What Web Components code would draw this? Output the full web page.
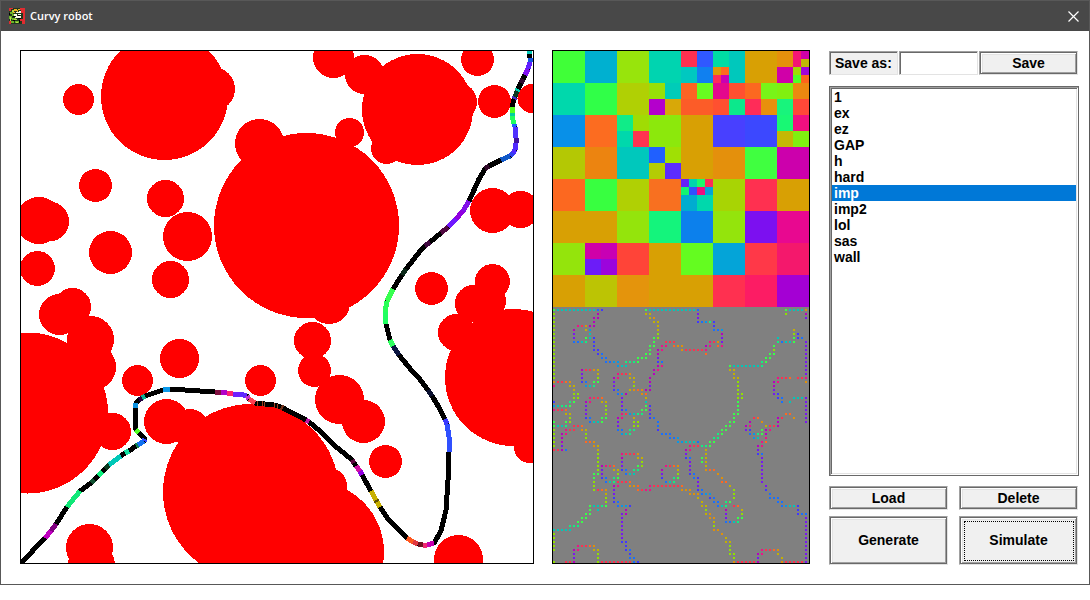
<!DOCTYPE html>
<html lang="en">
<head>
<meta charset="utf-8">
<title>Curvy robot</title>
<style>
html, body { margin: 0; background: #fff; }
body { font: bold 14px/16px "Liberation Sans", Arial, sans-serif; color: #000; }
</style>
</head>
<body>
<app-window>
  <title-bar slot="title">Curvy robot</title-bar>
  <scene-view></scene-view>
  <field-maps></field-maps>
  <map-panel></map-panel>
</app-window>

<script>
class AppWindow extends HTMLElement {
  constructor() {
    super();
    this.attachShadow({ mode: "open" }).innerHTML = `
      <style>
        :host { display: block; box-sizing: border-box; border: 1px solid #585858; border-top: 0; background: #fff; }
        main { display: grid; grid-template-columns: minmax(0, 514fr) minmax(0, 258fr) minmax(0, 251fr);
               gap: 18px; align-items: start; padding: 19px 10px 19px 19px; }
      </style>
      <slot name="title"></slot>
      <main><slot></slot></main>`;
  }
}

class TitleBar extends HTMLElement {
  constructor() {
    super();
    this.attachShadow({ mode: "open" }).innerHTML = `
      <style>
        :host { display: flex; align-items: center; gap: 5px; box-sizing: border-box; height: 31px; padding: 0 8px;
                border-top: 1px solid #585858; background: #484848; color: #fff;
                font: 600 11px/16px "Open Sans", "Noto Sans", sans-serif; }
        h1 { flex: 1; margin: 0; font: inherit; }
        button { display: flex; padding: 2px; border: 0; background: none; }
        svg { display: block; }
      </style>
      <svg width="16" height="16" viewBox="0 0 16 16" shape-rendering="crispEdges" aria-hidden="true">
        <path fill="#20381c" d="M0 0h16v16H0z"/>
        <path fill="#e02c30" d="M11 0h5v16h-3v-3h-2v-2h3V5h-2V2h-1zM0 0h4v1H2v2H0zM0 13h2v3H0zM12 12h2v1h-2z"/>
        <path fill="#6cb428" d="M1 4h3v2H1zM0 8h3v3H0zM3 10h4v2H3zM2 13h3v2H2zM6 13h5v2H6zM3 6h2v2H3z"/>
        <path fill="#b8dc48" d="M3 2h2v2H3zM1 9h1v4H1zM5 11h3v1H5zM7 14h2v1H7z"/>
        <path fill="#f0b020" d="M5 1h3v2H5zM8 2h1v2H8zM4 4h2v1H4zM9 1h2v1H9z"/>
        <path fill="#f8f8e8" d="M7 4h4v1H7zM5 6h3v2H5zM7 8h5v2H7zM6 9h3v1H6zM10 3h2v2h-2zM9 6h3v1H9z"/>
        <path fill="#000" d="M9 7h2v1H9zM4 8h2v1H4zM9 10h3v1H9zM4 12h2v1H4zM10 12h1v3h-1zM0 5h1v2H0z"/>
      </svg>
      <h1><slot></slot></h1>
      <button type="button" aria-label="Close">
        <svg width="11" height="11" viewBox="0 0 11 11" fill="none" stroke="#fff" stroke-width="1.2"><path d="M.5.5l10 10M10.5.5l-10 10"/></svg>
      </button>`;
  }
}

/* Obstacles: centre x, centre y, radius. Window coordinates, as is the trail. */
const OBSTACLES = [
  [78.5,99.5,15.5],[164.5,96.5,63.5],[213,89,22],[95.5,185.5,16.5],[165.5,198.5,18.5],[187.5,236.5,24.5],
  [110.5,252.5,21.5],[170.5,279.5,18.5],[39,220.5,23.5],[49,221.5,20],[37.5,268.5,17.5],[72.5,306.5,18.5],
  [59.5,314.5,20.5],[90.5,339.5,23.5],[93,367,23],[27.5,413,80.5],[112.5,431.5,18.5],[137.5,380.5,15.5],
  [179.5,358.5,19.5],[260.5,380.5,15.5],[166.5,421.5,22.5],[190,428,19],[251,492,88],[329,486,18],
  [313.5,552,70.5],[89.5,547.5,23.5],[91.5,565,23.5],[333.5,57.5,20.5],[364.5,74.5,19.5],[417.5,109.5,55.5],
  [457.5,102,19.5],[386.5,148.5,15.5],[477.5,59.5,16.5],[494.5,101.5,16.5],[532,98.5,14.5],[349.5,132.5,14.5],
  [306.5,225.5,92.5],[259.5,143.5,24.5],[329,303,21],[492.5,210.5,22.5],[520.5,209.5,18.5],[431.5,288.5,16.5],
  [492.5,281.5,17.5],[473.5,303.5,18.5],[487.5,301,18.5],[456.5,332.5,18.5],[513.5,377.5,68.5],[530,447,16],
  [312.5,340.5,18.5],[314.5,370.5,16.5],[339.5,399.5,24.5],[363.5,421.5,21.5],[385.5,461.5,16.5],[458.5,559.5,24.5]
];

/* Trail: each point ends a stretch painted in the colour named with it; no colour means black. */
const TRAIL = `21,563 45,538 51,531:c000c0 56,524:800080 67,507 80,491:10e878 91,483 94,480:105030 98,476
102,472:10f080 105,469 109,465:0a3a20 121,456:00c8b8 125,453 129,451:10e0a0 136,446 138,445:108050 144,441:1070f0
145,439:3048ff 139,433 136,430:50ff20 135,425 135,408 136,403:0a90e0 139,400 142,398:200040 145,396:10b090
154,393 163,390 170,389:0a98e8 215,392 221,392:801040 227,393:b000c8 233,394:ff2070 240,394:7020ff 247,396:6028ff
249,399:c030d0 255,403:ff4050 257,403 258,403:a04020 262,403 263,403:a04020 264,404 265,404:a04020 270,404 274,405 275,405:a04020
277,406 278,406:a04020 281,407 283,408:703018 306,420 309,422:c010a0 320,431 335,446 345,454 352,460 354,463:600840 356,466
360,471:d010a0 362,475:9000e0 371,491 376,500:c8b000 377,502:605000 380,507:c8b000 388,519 396,527 407,538
413,542:ff5820 418,544:e03840 423,545:701020 427,545:f02870 434,543:c800b0 441,531 446,510 448,480 449,452
449,437:3050ff 447,424:3050ff 445,419:3a38ff 437,404 432,396 428,390:0a1030 418,377 412,371 399,355 393,346:0a1440
390,340:30ff60 386,324 385,312:20ff60 387,301:28ff58 393,289:38ff50 402,275 406,269:0a2818 421,250 425,246
430,242:400840 441,233 448,227:500840 456,219:7018ff 463,211:9000e0 469,201:8010e8 479,179 485,169 489,166:300828
501,160 510,156:1058c8 513,153:3040f0 515,150:5028ff 516,143:5028ff 516,138:4010a0 515,127:5030ff 514,124:2060ff
512,116:20ff60 512,113:00d0a0 512,107:50ff20 514,99 515,97:4030c0 517,91:0a3820 518,89:00d0b0 521,83 523,79:300830 525,75 528,69:8010f0
530,62:6020ff 530,58:1858e0 529,54 529,50:00c8b8`;

class SceneView extends HTMLElement {
  constructor() {
    super();
    const circles = OBSTACLES.map(([x, y, r]) => `<circle cx="${x}" cy="${y}" r="${r}"/>`).join("");
    const steps = TRAIL.trim().split(/\s+/).map(s => s.split(":"));
    const line = steps.map(s => s[0]).join(" ");
    let coloured = "";
    steps.forEach(([p, c], i) => {
      if (c) coloured += `<polyline stroke="#${c}" points="${steps[i - 1][0]} ${p}"/>`;
    });
    this.attachShadow({ mode: "open" }).innerHTML = `
      <style>
        :host { display: block; border: 1px solid #000; }
        svg { display: block; width: 100%; height: auto; }
      </style>
      <svg viewBox="21 51 512 512" shape-rendering="crispEdges" role="img" aria-label="Obstacles and path">
        <g fill="#f00">${circles}</g>
        <g fill="none" stroke-width="5" stroke-linejoin="round"><polyline stroke="#000" points="${line}"/>${coloured}</g>
      </svg>`;
  }
}

/* Quadtree cells, one 32px block per entry: a colour, or four nested entries. */
const BLOCKS = [
  ["40ff38","00b0d0","98e40c","00d4b0",["ff3050","3058ff","00c8c0","1080f0"],
   ["00dca4","00c8bc",["e09808","ff6820","ff2c58","c800b4"],"00c8bc"],"d8a004",
   ["e4900c",["f41874","d000a8","f41874","c0b804"],"d000a8",["a0dc04","a004d8","50ff28","fc641c"]]],
  ["00d8ac","30ff48","b0d004",["98e008","00ccb8","b400cc","d8a808"],["fc6424","68fc20","fc5c28","fc5c28"],
   ["e4088c","ff5030","ff5030","0ce88c"],["fc6820","78f418","ff2c58","e8900c"],["80f010","ec8810","18f47c","ff4838"]],
  ["0890e8","fc6c20",["10ec88","a0dc04","00d8ac","ff3450"],"8ce80c","d8a004","4840ff","3c48ff",["18f874","f01080","c4b804","80f010"]],
  ["b4c804","ec8410","00c8bc",["2060ff","a0e004","b4cc04","5c2cff"],"d8a004","e4900c","40ff40","cc00ac"],
  ["fc6820","38ff40","b0d004","f87020",
   [["6820f8","00d4ac","14f470","3050ff"],["1cf86c","fc2c58","ec1080","04a4d8"],"00acd0","00d8ac"],"a8d404","ff3050","d8a004"],
  ["d8a004","d8a004","94e40c","14f47c","0c80ec","94e40c","7c10f0","e80890"],
  ["94e40c",["d000a8","c800b4","6c1cf8","9c04dc"],"ff4438","d8a004","64fc20","04a4d8","ff3848","f4186c"],
  ["d8a004","bcc404","e4940c","d8a004","d8a004","ff3050","fc1c64","a400d4"]
];

/* Edge normals: one line per row of the 64x64 grid, "column" or "from-to" and a hue letter. */
const HUES = { r:"ff3050", o:"ff6820", O:"e09008", y:"c4b000", l:"90e000", g:"38ff48", s:"10f080", t:"00c8b8",
               c:"0898e8", b:"1870ff", i:"4038ff", v:"7818f0", m:"b800c0", k:"f01088" };
const DOTS = `0g 1-10t 11b 12i 23g 24-35t 36b 58g 59-62t 63O
0l 11m 23y 24y 36v 58l 63m
0l 10m 11m 24y 25O 36v 63v
0l 10m 25y 26y 36i 37b 38c 39s 40i
0l 6k 7r 8O 9m 10m 26y 40i
0l 5m 8y 9c 26y 40b 41b 42c 60y
0l 5v 9t 26l 42m 60l 61i
0l 5v 8g 9t 10i 25g 26l 42v 56t 60g 61i 62b
0l 5b 6b 7t 8s 10i 25g 28r 29r 30r 39k 40r 41O 42v 56s 57b 58t 59t 60g 63v
0l 10i 24g 25g 27k 28k 30o 31O 32O 38m 39k 41o 42k 55g 63v
0l 10i 11i 24g 26m 27k 32O 33-37r 38k 55l 63v
0l 11i 12b 23g 24g 26m 38o 54g 55g 63v
0l 12b 13b 21-23g 26v 53g 54g 63v
0l 13b 14b 15c 16c 18-20s 21g 26i 27b 52s 53g 63v
0l 16c 17t 18t 26m 27k 44g 45-51t 52s 63v
0l 7m 8r 9r 10O 11y 25m 26k 44y 45y 63v
0l 7v 11y 16k 17r 18r 19O 25m 45y 63v
0l 7v 11l 15m 16k 19y 20y 24m 45y 46y 56k 57r 58r 59o 61r 62r 63k
0O 1r 2r 3o 4O 7i 8b 10g 11g 15v 20y 24m 46l 55m 56k 63O
0k 4y 5y 8c 9t 10s 15v 20l 24v 46l 55m
5y 15i 16b 19y 20O 21o 22O 23m 24m 46l 55v
5l 6l 16b 17c 18m 22O 23o 46l 47l 55v 56i
5l 6l 9k 10r 11r 12o 17v 23y 46l 47l 56i 57b 60t 61t 62t 63v
0i 4s 5g 8m 9k 12y 13y 17v 23t 46g 57b 59t 63v
0c 1t 2s 3s 4g 8v 13l 17v 23g 24i 46g 63v
0k 1r 2r 3o 8v 13l 17i 18b 22g 23g 24v 46g 63v
3y 4y 8v 13l 17k 18r 19c 20t 21s 22s 24i 45g 46g 58o 59o 63v
4l 8i 9b 12g 13g 16m 17k 20y 24i 25b 45g 50r 51o 56m 57r 60O 63v
0g 3g 4l 9b 10t 11t 12g 16v 20l 21l 26b 44g 45g 49m 52O 56m 63v
0g 1t 2t 3s 5r 6r 7o 16v 20l 21l 26b 43g 44g 48m 49k 53y 54r 55r 56m
0l 3k 4r 5r 7O 8y 16b 17b 19s 20s 26i 42g 43g 48v 49i 52g 53m 54k
0l 2m 3k 8l 17c 18t 19s 27b 28b 29b 41s 42g 49b 50c 51s 52g 53m
0l 2m 8l 29b 30b 31c 40s 41s 50c 51t 53k
0l 2m 8o 9o 10O 31c 32c 33t 34t 35t 36b 39g 40g 52k 53o
0l 2v 10O 11y 34k 35r 36r 37s 38s 39g 51m 52k
0r 1r 2m 3b 11y 33m 34k 38y 51v
11l 17k 18r 19r 20r 21O 33v 38y 51i 52b
11l 17m 21y 22y 33i 34b 37g 38y 52v
11l 17v 22l 34v 37g 38y 52v
11l 12m 13k 14r 15o 17v 21g 22l 28k 29r 30o 31O 34v 38y 52v
11l 12v 15y 16y 17i 18b 20s 21s 27m 31y 34v 38O 39o 40o 52v
10g 11g 12v 16l 18b 19t 20t 27v 31l 34i 35b 41O 52v
10g 12i 13b 15s 16g 27i 30s 31g 35b 36i 42O 52v
10l 13b 14t 15s 16r 17r 18r 19o 28b 29t 30s 36v 42o 43o 52v
10l 15m 16k 19O 20O 21o 24k 25-31r 32o 36v 44y 53v
10l 11r 12o 13O 15v 21o 22r 23k 24k 32O 33O 34O 36i 37b 45l 53i
13y 15v 34O 35O 36O 37b 38c 39c 45l 54b
13l 15i 36y 39i 40b 45l 54b 55b 56b
13l 15i 16b 37y 40b 41b 43s 44g 56b 57b
9g 10t 11t 12s 13g 16b 17c 18c 19i 37y 38y 41b 42t 43s 45r 46o 57b 58c 59t 60t 61i
9g 11t 18m 38l 43m 47y 61i
8g 9g 17v 18m 38y 39O 43v 47l 61i 62b 63b
7g 8g 17v 39O 40O 43v 46g 47g 63v
6g 7g 17v 40y 43b 44b 45t 46s 63v
4s 5s 6s 17v 40l 63v
0-4t 17v 40O 41O 63v
0l 17v 42O 63v
0l 17v 43y 63v
0l 17i 18i 43y 44y 63v
0l 6k 7r 8r 9o 10O 18i 44l 63v
0l 5m 6k 10y 11y 18i 19b 44l 52k 53r 54r 55o 56O 63v
5v 11l 19i 44l 45l 51m 52k 56y 63v
5v 11l 19b 20b 45l 51v 57y 63v
0l 3r 4r 5m 11l 12-19r 20b 21i 45O 46-50r 51m 57O 58-62r 63v`;

class FieldMaps extends HTMLElement {
  constructor() {
    super();
    const cell = (c, x, y, s) => Array.isArray(c)
      ? c.map((k, i) => cell(k, x + (i % 2) * s / 2, y + (i >> 1) * s / 2, s / 2)).join("")
      : `<rect x="${x}" y="${y}" width="${s}" height="${s}" fill="#${c}"/>`;
    const blocks = BLOCKS.map((row, j) => row.map((c, i) => cell(c, i * 32, j * 32, 32)).join("")).join("");
    const paths = {};
    DOTS.split("\n").forEach((row, j) => row.split(" ").forEach(t => {
      const hue = t.slice(-1);
      const [from, to = from] = t.slice(0, -1).split("-").map(Number);
      for (let i = from; i <= to; i++) paths[hue] = (paths[hue] || "") + `M${i * 4} ${258 + j * 4}h2v2h-2z`;
    }));
    const dots = Object.entries(paths).map(([h, d]) => `<path fill="#${HUES[h]}" d="${d}"/>`).join("");
    this.attachShadow({ mode: "open" }).innerHTML = `
      <style>
        :host { display: block; border: 1px solid #000; }
        svg { display: block; width: 100%; height: auto; }
      </style>
      <svg viewBox="0 0 256 512" shape-rendering="crispEdges" role="img" aria-label="Direction maps">
        ${blocks}<rect y="256" width="256" height="256" fill="#808080"/>${dots}
      </svg>`;
  }
}

class EdgeButton extends HTMLElement {
  constructor() {
    super();
    this.attachShadow({ mode: "open" }).innerHTML = `
      <style>
        :host { display: block; box-sizing: border-box; height: 24px; border: 1px solid; border-color: #a0a0a0 #e3e3e3 #e3e3e3 #a0a0a0; }
        :host([tall]) { height: 49px; }
        button { display: block; position: relative; box-sizing: border-box; width: 100%; height: 100%; padding: 0;
                 border: 1px solid #696969; border-radius: 0; background: #f0f0f0;
                 box-shadow: inset 1px 1px #fff, inset -1px -1px #a0a0a0, inset 2px 2px #e3e3e3;
                 color: inherit; font: inherit; outline: 0; }
        :host([tall]) button { padding-bottom: 1px; }
        :host([current]) button::after { content: ""; position: absolute; inset: 3px 2px 2px 3px; border: 1px dotted #000; }
      </style>
      <button type="button"><slot></slot></button>`;
  }
}

class MapList extends HTMLElement {
  constructor() {
    super();
    const options = this.getAttribute("items").split(" ")
      .map(n => `<option${n === this.getAttribute("value") ? " selected" : ""}>${n}</option>`).join("");
    this.attachShadow({ mode: "open" }).innerHTML = `
      <style>
        :host { display: block; border: 1px solid #696969; }
        div { padding: 2px; background: #fff;
              box-shadow: inset 1px 1px #a0a0a0, inset -1px -1px #fff, inset 2px 2px #696969, inset -2px -2px #e3e3e3; }
        select { display: block; width: 100%; margin: 0; padding: 0; border: 0; border-radius: 0; outline: 0; background: none;
                 color: #000; font: inherit; overflow: hidden; scrollbar-width: none; }
        option { box-sizing: border-box; height: 16px; min-height: 16px; padding: 0 2px; font: inherit; line-height: 16px; }
        option:checked { background: linear-gradient(#0078d7, #0078d7); color: #fff !important; }
      </style>
      <div><select size="24" aria-label="Saved maps">${options}</select></div>`;
  }
}

class MapPanel extends HTMLElement {
  constructor() {
    super();
    this.attachShadow({ mode: "open" }).innerHTML = `
      <style>
        :host { display: block; padding: 1px 0 0 1px; }
        form { display: grid; grid-template-columns: minmax(0, 69fr) minmax(0, 79fr) minmax(0, 99fr); gap: 1px; margin: 0 1px 11px 0; }
        label, input { box-sizing: border-box; width: 100%; height: 24px; margin: 0; border: 1px solid;
                       border-color: #a0a0a0 #e3e3e3 #e3e3e3 #a0a0a0; border-radius: 0; font: inherit; outline: 0;
                       box-shadow: inset 1px 1px #696969; }
        label { padding: 3px 5px; background: #f0f0f0; white-space: nowrap; }
        input { padding: 2px 4px; background: #fff; }
        .actions { display: grid; grid-template-columns: 1fr 1fr; gap: 6px 11px; margin: 10px 1px 0 0; }
      </style>
      <form onsubmit="return false">
        <label for="name">Save as:</label>
        <input id="name" type="text">
        <edge-button>Save</edge-button>
      </form>
      <map-list items="1 ex ez GAP h hard imp imp2 lol sas wall" value="imp"></map-list>
      <div class="actions">
        <edge-button>Load</edge-button>
        <edge-button>Delete</edge-button>
        <edge-button tall>Generate</edge-button>
        <edge-button tall current>Simulate</edge-button>
      </div>`;
  }
}

customElements.define("app-window", AppWindow);
customElements.define("title-bar", TitleBar);
customElements.define("scene-view", SceneView);
customElements.define("field-maps", FieldMaps);
customElements.define("edge-button", EdgeButton);
customElements.define("map-list", MapList);
customElements.define("map-panel", MapPanel);
</script>
</body>
</html>
